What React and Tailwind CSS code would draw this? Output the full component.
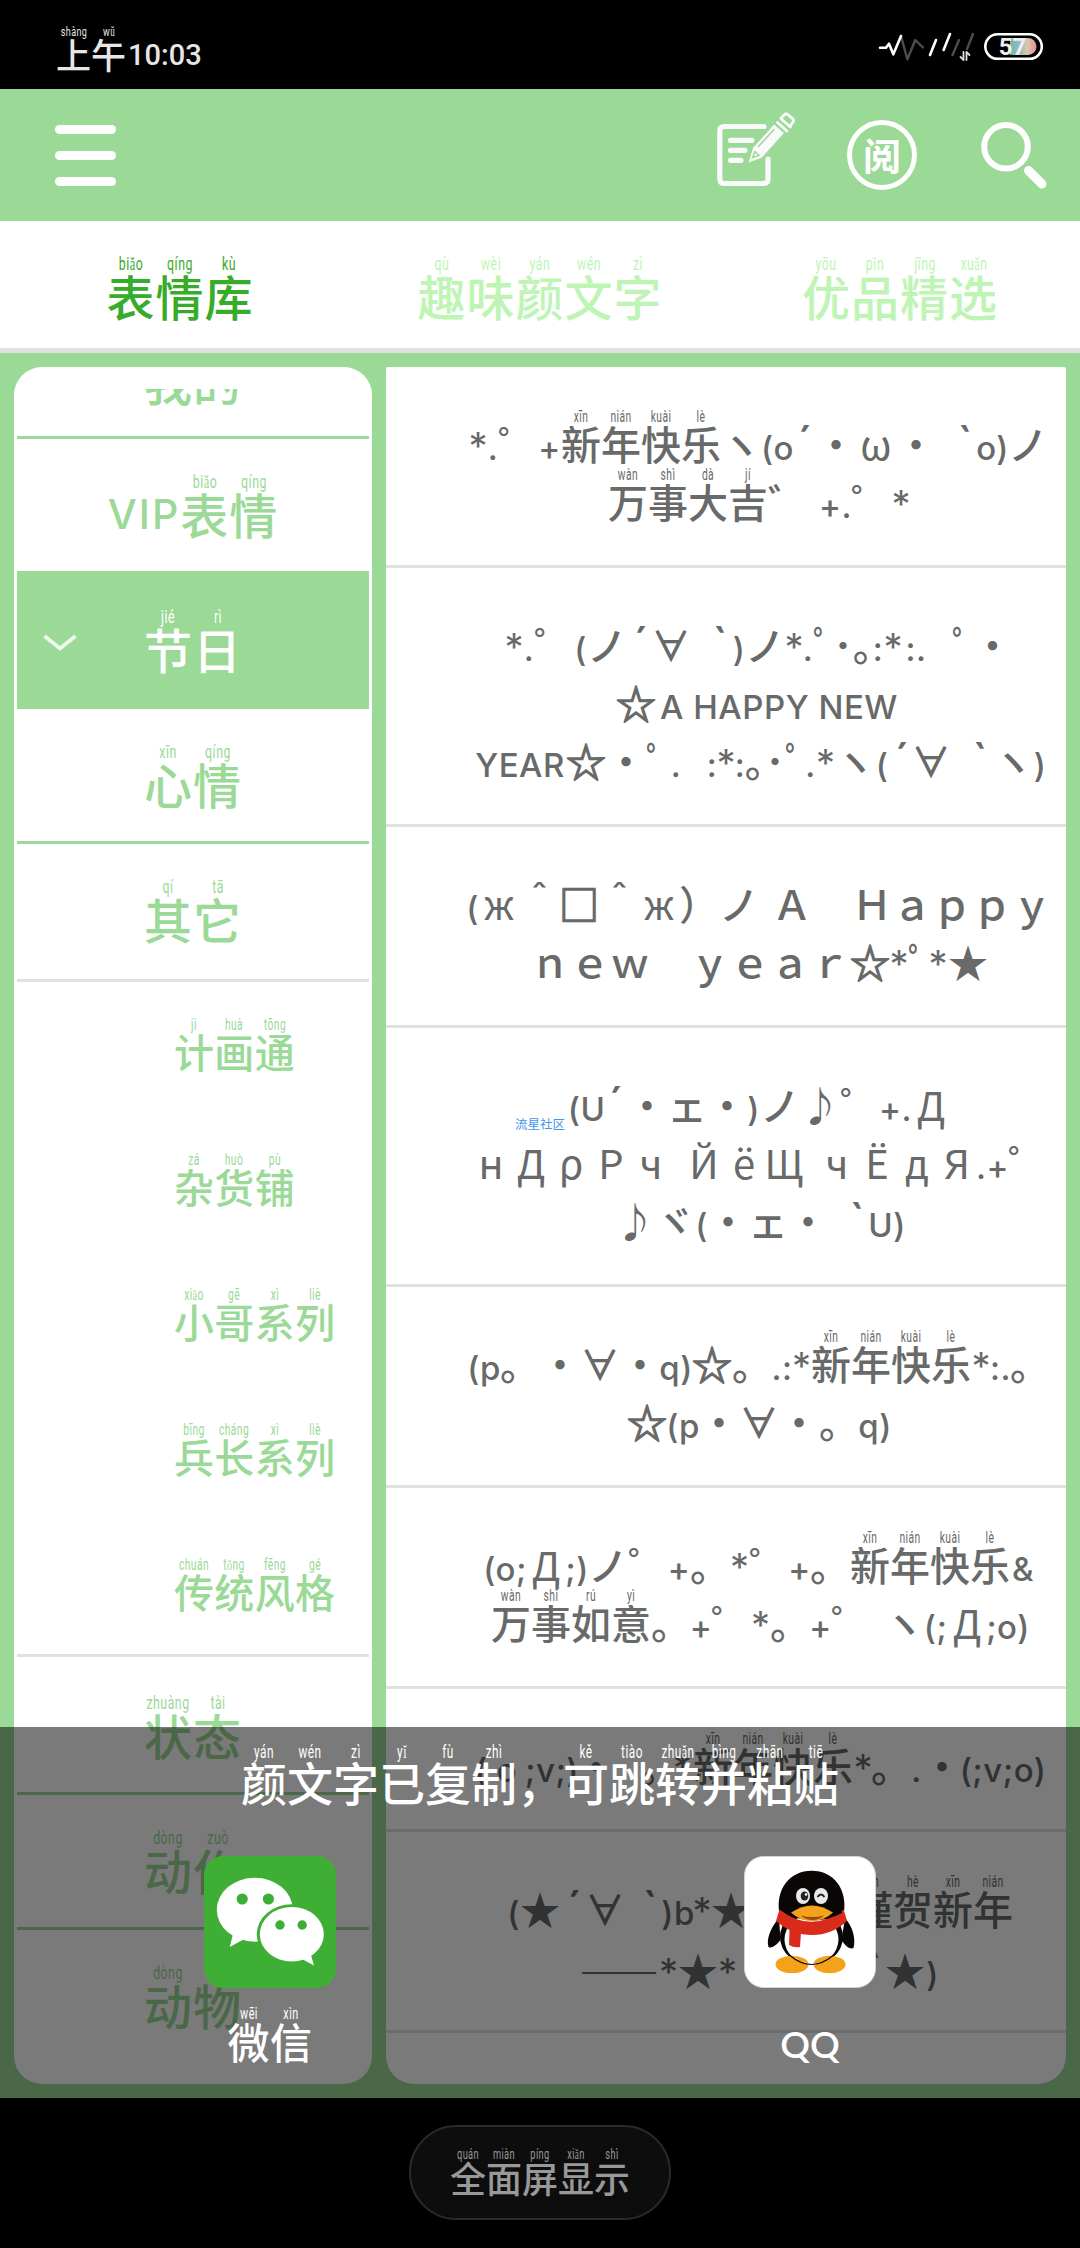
import React from "react";
import clsx from "clsx";

const PINYIN = {
  上: "shàng", 午: "wǔ", 表: "biǎo", 情: "qíng", 库: "kù",
  趣: "qù", 味: "wèi", 颜: "yán", 文: "wén", 字: "zì",
  优: "yōu", 品: "pǐn", 精: "jīng", 选: "xuǎn",
  节: "jié", 日: "rì", 心: "xīn", 其: "qí", 它: "tā",
  计: "jì", 画: "huà", 通: "tōng", 杂: "zá", 货: "huò", 铺: "pù",
  小: "xiǎo", 哥: "gē", 系: "xì", 列: "liè", 兵: "bīng", 长: "cháng",
  传: "chuán", 统: "tǒng", 风: "fēng", 格: "gé",
  状: "zhuàng", 态: "tài", 动: "dòng", 作: "zuò", 物: "wù",
  新: "xīn", 年: "nián", 快: "kuài", 乐: "lè",
  万: "wàn", 事: "shì", 大: "dà", 吉: "jí", 如: "rú", 意: "yì",
  谨: "jǐn", 贺: "hè", 已: "yǐ", 复: "fù", 制: "zhì",
  可: "kě", 跳: "tiào", 转: "zhuǎn", 并: "bìng", 粘: "zhān", 贴: "tiē",
  微: "wēi", 信: "xìn", 全: "quán", 面: "miàn", 屏: "píng", 显: "xiǎn", 示: "shì",
};

const TABS = ["表情库", "趣味颜文字", "优品精选"];
const SERIES = ["计画通", "杂货铺", "小哥系列", "兵长系列", "传统风格"];

// Every line is [indent, ...runs]; a run is [text, width] or [text, width, kind]
// and a bare number is an empty gap. Kinds are the keys of RUN_STYLES.
const KAOMOJI = [
  [
    [82, ["*", 20, "s"], [".", 10, "l"], ["゜", 40], ["+", 23, "l"], ["新年快乐", 160], ["ヽ", 40], ["(o", 33, "l"], ["´", 22, "a"], ["・", 40], ["ω", 40, "n"], ["・", 40], 17, ["`", 24, "a"], ["o)", 31, "l"], ["ノ", 40]],
    [222, ["万事大吉", 160], ["゛", 40], 12, ["+.", 31, "l"], ["゜", 40], ["*", 20, "s"]],
  ],
  [
    [118, ["*", 20, "s"], [".", 10, "l"], ["゜", 40], ["(", 13, "l"], ["ノ", 40], ["´", 28, "a"], ["∀", 32], 20, ["`", 26, "a"], [")", 12, "l"], ["ノ", 40], ["*", 18, "s"], [".", 10, "l"], ["ﾟ", 20], ["･", 20], ["｡", 20], [":", 10, "l"], ["*", 20, "s"], [":.", 26, "l"], 23, ["ﾟ", 20], ["・", 41]],
    [230, ["☆", 40, "b"], ["A HAPPY NEW", 246, "l"]],
    [88, ["YEAR", 92, "l"], ["☆", 40, "b"], ["・", 40], ["ﾟ", 20], [".", 20, "l"], 21, [":", 10, "l"], ["*", 18, "s"], [":", 10, "l"], ["｡", 20], ["･", 20], ["ﾟ", 20], [".", 11, "l"], ["*", 19, "s"], ["ヽ", 40], ["(", 14, "l"], ["´", 26, "a"], ["∀", 32], 20, ["`", 26, "a"], ["ヽ", 40], [")", 14, "l"]],
  ],
  [
    [80, ["(", 13, "l"], ["ж", 40, "n"], ["＾", 40], ["□", 40, "b"], ["＾", 40], ["ж", 40, "n"], ["）", 40], ["ノ", 40], 13, ["Ａ　Ｈａｐｐｙ", 280]],
    [144, ["ｎｅｗ　ｙｅａｒ", 320], ["☆", 40, "b"], ["*", 18, "s"], ["ﾟ", 20], ["*", 20, "s"], ["★", 40]],
  ],
  [
    [182, ["(U", 37, "l"], ["´", 22, "a"], ["・", 40], ["ェ", 40], ["・", 40], [")", 13, "l"], ["ノ", 40], ["♪", 40], ["゜", 40], ["+.", 31, "l"], ["Д", 40, "n"]],
    [85, ["н", 40, "n"], ["Д", 40, "n"], ["ρ", 40, "n"], ["Р", 40, "n"], ["ч", 40, "n"], 13, ["Й", 40, "n"], ["ё", 40, "n"], ["Щ", 40, "n"], 13, ["ч", 40, "n"], ["Ё", 40, "n"], ["д", 40, "n"], ["Я", 40, "n"], [".+", 31, "l"], ["゜", 40]],
    [229, ["♪", 40], ["ヾ", 40], ["(", 13, "l"], ["・", 40], ["ェ", 40], ["・", 40], 17, ["`", 24, "a"], ["U)", 36, "l"]],
  ],
  [
    [82, ["(p", 32, "l"], ["。", 40], ["・", 40], ["∀", 40], ["・", 40], ["q)", 32, "l"], ["☆", 40, "b"], ["。", 40], [".:", 20, "l"], ["*", 19, "s"], ["新年快乐", 160], ["*", 20, "s"], [":.", 19, "l"], ["。", 40]],
    [241, ["☆", 40, "b"], ["(p", 32, "l"], ["・", 40], ["∀", 40], ["・", 40], ["。", 40], ["q)", 32, "l"]],
  ],
  [
    [98, ["(o;", 42, "l"], ["Д", 40, "n"], [";)", 22, "l"], ["ノ", 40], ["゜", 40], ["+", 22, "l"], ["。", 40], ["*", 19, "s"], ["゜", 40], ["+", 21, "l"], ["。", 40], ["新年快乐", 160], ["&", 26, "l"]],
    [105, ["万事如意", 160], ["。", 40], ["+", 20, "l"], ["゜", 40], ["*", 19, "s"], ["。", 40], ["+", 21, "l"], ["゜", 40], 13, ["ヽ", 40], ["(;", 23, "l"], ["Д", 40, "n"], [";o)", 42, "l"]],
  ],
  [
    [88, ["(", 14, "l"], ["o", 38, "l"], [";v;)", 52, "l"], ["・", 36], 14, ["｡", 44], ["*", 21, "s"], ["新年快乐", 160], ["*", 20, "s"], ["。", 36], [".", 15, "l"], ["・", 36], ["(;v;o)", 86, "l"]],
  ],
  [
    [121, ["(", 13, "l"], ["★", 40], ["´", 29, "a"], ["∀", 32], 16, ["`", 26, "a"], [")b", 30, "l"], ["*", 18, "s"], ["★", 40], 102, ["谨贺新年", 160]],
    [193, ["——", 80, "d"], ["*", 19, "s"], ["★", 40], ["*", 19, "s"], 127, ["`", 21, "a"], ["★", 40], [")", 15, "l"]],
  ],
];

const RUN_STYLES = {
  l: "font-['Inter'] text-[33px] tracking-[0.5px]", // half-width latin
  s: "font-['Inter'] text-[38px] font-normal", // asterisks
  a: "font-['Inter'] text-[46px]", // raised accents
  n: "text-[40px] font-normal",
  b: "text-[40px] [-webkit-text-stroke:1.4px_#686a69]",
  d: "text-[47px] font-light",
};

const Pinyin = ({ text }) =>
  [...text].map((char, i) =>
    PINYIN[char] ? (
      <span key={i} className="relative inline-block leading-none">
        {char}
        <span className="absolute left-1/2 -top-[0.84em] -translate-x-1/2 scale-x-[.66] font-['Roboto'] text-[0.39em] font-normal leading-none tracking-[0.04em]">
          {PINYIN[char]}
        </span>
      </span>
    ) : (
      <span key={i}>{char}</span>
    )
  );

const Line = ({ indent, runs }) => (
  <div className="flex h-[58px] items-baseline whitespace-pre" style={{ paddingLeft: indent }}>
    {runs.map((run, i) =>
      typeof run === "number" ? (
        <span key={i} style={{ width: run }} />
      ) : (
        <span
          key={i}
          className={clsx("flex shrink-0 justify-center leading-[58px]", RUN_STYLES[run[2]] || "text-[40px]")}
          style={{ width: run[1] }}
        >
          <span>
            <Pinyin text={run[0]} />
          </span>
        </span>
      )
    )}
  </div>
);

const StatusBar = () => (
  <div className="flex h-[89px] shrink-0 justify-between bg-black text-[#e6e6e6]">
    <div className="flex items-start pl-[56px] pt-[36px] text-[35px] leading-none">
      <Pinyin text="上午" />
      <span className="ml-[2px] mt-[5px] font-['Roboto'] text-[29px] font-medium leading-none">10:03</span>
    </div>
    <svg className="h-[89px] w-[220px]" viewBox="860 0 220 89" fill="none" strokeLinecap="round" strokeLinejoin="round">
      <path d="M901 36l6.4 23.3L915.3 40l7.7 7.5" stroke="#4d4d4d" strokeWidth="2.4" />
      <path d="M880 47.7h6l3-4 4.3 10.6L901 36" stroke="#fff" strokeWidth="2.6" />
      <path d="M930 55l6-15M943.6 50l6.4-16" stroke="#fff" strokeWidth="2.6" />
      <path d="M952.5 55l6.5-15M973 34l-6 15" stroke="#4d4d4d" strokeWidth="2.4" />
      <path d="M963.5 52v8l-3-3M966.5 60v-8l3 3" stroke="#ddd" strokeWidth="1.8" />
      <defs>
        <linearGradient id="battery" x1="1010" x2="1037" y1="0" y2="0" gradientUnits="userSpaceOnUse">
          <stop offset="0" stopColor="#7cb890" />
          <stop offset=".3" stopColor="#8bb9cf" />
          <stop offset=".65" stopColor="#d9c7a4" />
          <stop offset="1" stopColor="#e58a9c" />
        </linearGradient>
      </defs>
      <rect x="985.3" y="34.3" width="56.5" height="24.5" rx="12.2" stroke="#fff" strokeWidth="2.6" />
      <path d="M1010 38h18a8.5 8.5 0 010 17h-18z" fill="url(#battery)" />
      <text x="1012.5" y="55" textAnchor="middle" fill="#eee" className="font-['Roboto'] text-[24px] font-bold">57</text>
    </svg>
  </div>
);

const Header = () => (
  <div className="flex h-[132px] shrink-0 items-center justify-between bg-[#9bd997]">
    <div className="ml-[55px] mt-px flex flex-col gap-[17px]">
      <span className="h-[9px] w-[61px] rounded-full bg-white" />
      <span className="h-[9px] w-[61px] rounded-full bg-white" />
      <span className="h-[9px] w-[61px] rounded-full bg-white" />
    </div>
    <div className="flex h-full">
      <svg className="mt-[23px] h-[76px] w-[80px]" viewBox="0 0 80 76" fill="none" stroke="#fafafa" strokeWidth="5.2" strokeLinecap="round">
        <path d="M47 14.5H7Q2.8 14.5 2.8 19V67q0 4.5 4.5 4.5h39q4.7 0 4.7-4.5V47" />
        <path d="M13.5 28.3H35M13.5 38.3H28M13.5 48.3H24" />
        <path d="M31 51l4.5-15L57 12l10.5 9L45 46z" fill="#fafafa" stroke="#9bd997" strokeWidth="1" />
        <path d="M35.5 45.5l2.5-6 4 4zM41.5 34.5L57 17.5" stroke="#9bd997" strokeWidth="1.5" />
        <path d="M60.5 10.5l9.5 8.5" strokeWidth="2.8" />
        <path d="M63.8 6.5l9.5 8.5M63.8 6.5L67.5 2.5q1.5-1 3 0l5.5 4.5q1.2 1.500 0 3l-3 4.500" strokeWidth="2.8" />
      </svg>
      <div className="ml-[50px] mt-[31px] flex h-[70px] w-[70px] items-center justify-center rounded-full border-[5.5px] border-white text-[38px] font-bold leading-none text-white">
        <span className="-mt-[3px]">阅</span>
      </div>
      <svg className="ml-[58px] mt-[27px] h-[80px] w-[105px]" viewBox="975 116 105 80" fill="none" stroke="#fff">
        <circle cx="1006" cy="146.7" r="21.8" strokeWidth="6" />
        <path d="M1028.5 170.5l13.5 13.5" strokeWidth="9" strokeLinecap="round" />
      </svg>
    </div>
  </div>
);

const Category = ({ text, latin, className }) => (
  <div className={clsx("flex shrink-0 items-center justify-center border-b-[3px] text-[48px] leading-none tracking-[1px]", className)}>
    {latin && <span className="mt-[3px] font-['Inter'] text-[41px] tracking-[2px]">{latin}</span>}
    <Pinyin text={text} />
  </div>
);

const Sidebar = () => (
  <div className="h-[1717px] w-[358px] overflow-hidden rounded-[28px] bg-white px-[3px] pt-[22px]">
    <div className="flex h-[1673px] flex-col overflow-hidden text-[#9bd997]">
      <div className="flex h-[50px] shrink-0 items-end justify-center overflow-hidden border-b-[3px] border-[#9bd997] pb-[32px] text-[48px] leading-none tracking-[1px]">
        我的
      </div>
      <Category latin="VIP" text="表情" className="h-[135px] border-[#9bd997] pt-[15px]" />
      <div className="relative">
        <Category text="节日" className="h-[135px] border-[#9bd997] bg-[#9bd997] pt-[15px] text-white" />
        <svg className="absolute left-[25px] top-[58px] h-[22px] w-[36px]" viewBox="0 0 36 22" fill="none" stroke="#edf8ec" strokeWidth="4">
          <path d="M2.5 4L18 16.5 33.5 4" />
        </svg>
      </div>
      <Category text="心情" className="h-[135px] border-[#9bd997] pt-[15px]" />
      <Category text="其它" className="h-[135px] border-transparent pt-[15px]" />
      <div className="shrink-0 border-y-[3px] border-[#e1e1e1] text-[40px] leading-none tracking-[0.3px]">
        {SERIES.map((name) => (
          <div key={name} className="-mt-[3px] mb-[3px] flex h-[135px] items-center pl-[157px] pt-[9px] last:mb-0">
            <Pinyin text={name} />
          </div>
        ))}
      </div>
      <Category text="状态" className="h-[138px] border-[#9bd997] pt-[18px]" />
      <Category text="动作" className="h-[135px] border-[#9bd997] pt-[15px]" />
      <Category text="动物" className="h-[135px] border-transparent pt-[15px]" />
    </div>
  </div>
);

const KaomojiList = () => (
  <div className="h-[1717px] w-[680px] overflow-hidden rounded-b-[28px] rounded-t-[2px] bg-white text-[#686a69]">
    {KAOMOJI.map((lines, i) => (
      <div key={i} className="relative border-b-[3px] border-[#e1e1e1] pb-[35px] pt-[47px]">
        {lines.map(([indent, ...runs], j) => (
          <Line key={j} indent={indent} runs={runs} />
        ))}
        {i === 3 && (
          <span className="absolute left-[129px] top-[90px] text-[12.5px] font-normal leading-none text-[#3d97ee]">流星社区</span>
        )}
      </div>
    ))}
  </div>
);

const WeChatIcon = () => (
  <svg className="h-[132px] w-[132px]" viewBox="0 0 132 132">
    <rect width="132" height="132" rx="19" fill="#3eaf34" />
    <ellipse cx="50.8" cy="53.7" rx="38" ry="32" fill="#fff" />
    <path d="M29.5 76l-3.7 15L42 82z" fill="#fff" />
    <circle cx="38.2" cy="43" r="5.6" fill="#3eaf34" />
    <circle cx="64.4" cy="43" r="5.6" fill="#3eaf34" />
    <ellipse cx="87.8" cy="78.2" rx="35" ry="30" fill="#3eaf34" />
    <ellipse cx="87.8" cy="78.2" rx="32" ry="27.3" fill="#fff" />
    <path d="M96 102l14 7.5-3.5-12z" fill="#fff" />
    <circle cx="76" cy="69" r="4.7" fill="#3eaf34" />
    <circle cx="98.2" cy="69" r="4.7" fill="#3eaf34" />
  </svg>
);

const QQIcon = () => (
  <svg className="h-[132px] w-[132px]" viewBox="0 0 132 132">
    <rect x=".5" y=".5" width="131" height="131" rx="19" fill="#fff" stroke="#d4d4d4" />
    <path d="M35 62C27 71 22 83 24.500 91c3 2 8-2 12-7zM101 62c8 9 11 21 8.500 30-4 2-9-3-12-8z" fill="#0a0606" />
    <ellipse cx="67.5" cy="81" rx="31.5" ry="28" fill="#0a0606" />
    <path d="M35.5 58C31 33 46 14.7 67.7 14.7S104 33 99.8 58q-14 12-32 12t-32.3-12z" fill="#0a0606" />
    <ellipse cx="67.5" cy="83.500" rx="27" ry="25" fill="#fff" />
    <ellipse cx="48" cy="108.5" rx="16.5" ry="8.7" fill="#f5a21b" />
    <ellipse cx="85.5" cy="108.5" rx="16" ry="8.7" fill="#f5a21b" />
    <path d="M48 100q20 15 40 0l-13 7.500-7 2.500-7-2.500z" fill="#fff" />
    <path d="M46 99.500q21.500 18 43 0" fill="none" stroke="#0a0606" strokeWidth="1.200" />
    <path d="M35.5 53.5Q67 78 99.500 53.500q2 5.500 3.500 11.500-15 14-35 14T32 65z" fill="#d92b1c" />
    <path d="M45.500 73l11.500 3-1 15q-6 1-11-2z" fill="#d92b1c" />
    <path d="M38 55q29 18 60 2l-1-12H38z" fill="#0a0606" />
    <ellipse cx="59" cy="40" rx="7" ry="8" fill="#e9e9e9" />
    <ellipse cx="77" cy="40" rx="7" ry="8" fill="#e9e9e9" />
    <ellipse cx="60.500" cy="40" rx="3.800" ry="4.600" fill="#222" />
    <circle cx="62" cy="38.500" r="1.300" fill="#fff" />
    <path d="M73.500 41q3.500-5 7 0" fill="none" stroke="#222" strokeWidth="2" />
    <path d="M47 56.500q11-7 21-7t21 7q-9 8.500-21 8.500t-21-8.500z" fill="#f5a21b" />
    <path d="M57 59.500q11 3 23 0-5 4.500-11.500 4.500T57 59.500z" fill="#9c4a12" />
  </svg>
);

const ShareSheet = () => (
  <div className="absolute inset-x-0 top-[1727px] h-[371px] bg-black/52 text-white">
    <div className="flex justify-center pt-[31px] text-[46px] font-medium leading-none">
      <Pinyin text="颜文字已复制，可跳转并粘贴" />
    </div>
    <div className="mt-[52px] grid grid-cols-2 justify-items-center">
      <div className="flex flex-col items-center">
        <WeChatIcon />
        <div className="mt-[32px] text-[42px] font-medium leading-none tracking-[0.5px]">
          <Pinyin text="微信" />
        </div>
      </div>
      <div className="flex flex-col items-center">
        <QQIcon />
        <div className="mt-[37px] font-['Lato'] text-[37px] font-semibold leading-none">QQ</div>
      </div>
    </div>
  </div>
);

const App = () => (
  <div className="relative flex h-[2248px] w-[1080px] flex-col overflow-hidden bg-black font-['Noto_Sans_CJK_SC',sans-serif] font-medium">
    <StatusBar />
    <Header />
    <div className="grid h-[132px] shrink-0 grid-cols-3 border-b-[5px] border-[#e1e1e1] bg-white text-[48px] leading-none tracking-[1px]">
      {TABS.map((tab, i) => (
        <div key={tab} className={clsx("flex items-center justify-center pt-[20px]", i === 0 ? "text-[#37ab2a]" : "text-[#bef5b4]")}>
          <Pinyin text={tab} />
        </div>
      ))}
    </div>
    <div className="flex h-[1745px] shrink-0 gap-[14px] bg-[#9bd997] px-[14px] pt-[14px]">
      <Sidebar />
      <KaomojiList />
    </div>
    <div className="flex flex-1 items-start justify-center pt-[27px]">
      <div className="flex h-[95px] w-[262px] items-center justify-center rounded-full border-2 border-[#2a2a2a] bg-[#0d0d0d] pt-[9px] text-[36px] leading-none text-[#999]">
        <Pinyin text="全面屏显示" />
      </div>
    </div>
    <ShareSheet />
  </div>
);

export default App;
